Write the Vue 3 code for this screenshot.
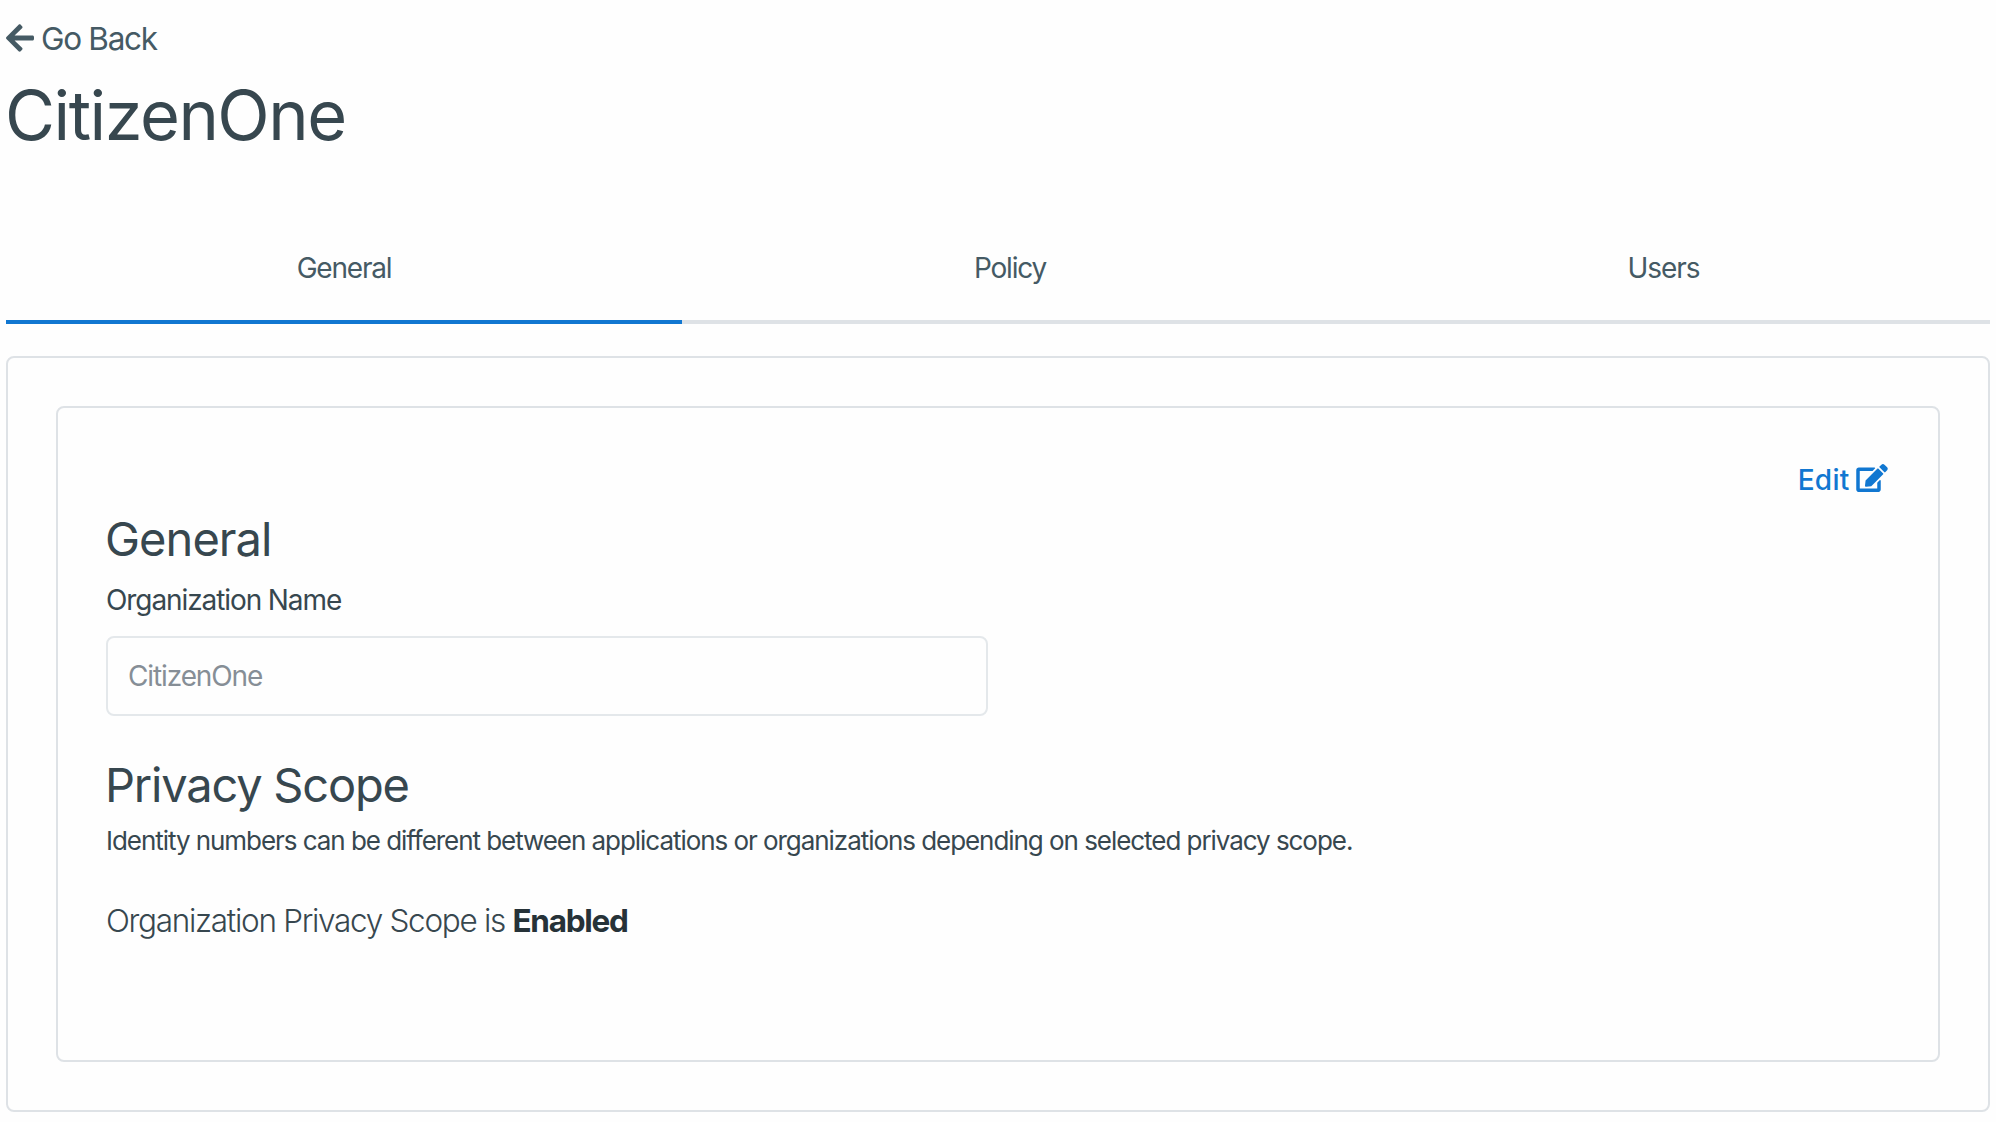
<script setup>
import { ref } from 'vue'

const active = ref('general')
const tabs = [
  { id: 'general', label: 'General' },
  { id: 'policy', label: 'Policy' },
  { id: 'users', label: 'Users' }
]
const organization = ref('CitizenOne')
</script>

<template>
  <main class="page">
    <a class="back">
      <svg class="back-icon" viewBox="0 0 448 512" aria-hidden="true">
        <path fill="currentColor" d="M257.5 445.1l-22.2 22.2c-9.4 9.4-24.6 9.4-33.9 0L7 273c-9.4-9.4-9.4-24.6 0-33.9L201.4 44.7c9.4-9.4 24.6-9.4 33.9 0l22.2 22.2c9.5 9.5 9.3 25-.4 34.3L136.6 216H424c13.3 0 24 10.7 24 24v32c0 13.3-10.7 24-24 24H136.6l120.5 114.8c9.8 9.3 10 24.8.4 34.3z" />
      </svg>
      <span>Go Back</span>
    </a>
    <h1 class="title">{{ organization }}</h1>

    <nav class="tabs">
      <a
        v-for="tab in tabs"
        :key="tab.id"
        class="tab"
        :class="[tab.id, { active: tab.id === active }]"
        @click="active = tab.id"
      >{{ tab.label }}</a>
    </nav>

    <section class="card outer">
      <div class="card inner">
        <a class="edit">
          <span>Edit</span>
          <svg class="edit-icon" viewBox="0 0 576 512" aria-hidden="true">
            <path fill="currentColor" d="M402.6 83.2l90.2 90.2c3.8 3.8 3.8 10 0 13.8L274.4 405.6l-92.8 10.3c-12.4 1.4-22.9-9.1-21.5-21.5l10.3-92.8L388.8 83.2c3.8-3.8 10-3.8 13.8 0zm162-22.9l-48.8-48.8c-15.2-15.2-39.9-15.2-55.2 0l-35.4 35.4c-3.8 3.8-3.8 10 0 13.8l90.2 90.2c3.8 3.8 10 3.8 13.8 0l35.4-35.4c15.2-15.3 15.2-40 0-55.2zM384 346.2V448H64V128h229.8c3.2 0 6.2-1.3 8.5-3.5l40-40c7.6-7.6 2.2-20.5-8.5-20.5H48C21.5 64 0 85.5 0 112v352c0 26.5 21.5 48 48 48h352c26.5 0 48-21.5 48-48V306.2c0-10.7-12.9-16-20.5-8.5l-40 40c-2.2 2.3-3.5 5.3-3.5 8.5z" />
          </svg>
        </a>
        <h2 class="heading">General</h2>
        <label class="label" for="org-name">Organization Name</label>
        <input id="org-name" class="field" type="text" :value="organization" disabled />
        <h2 class="heading privacy">Privacy Scope</h2>
        <p class="hint">Identity numbers can be different between applications or organizations depending on selected privacy scope.</p>
        <p class="status">Organization Privacy Scope is <strong>Enabled</strong></p>
      </div>
    </section>
  </main>
</template>

<style>
body {
  background: #fefefe;
}
</style>

<style scoped>
.page,
.page * {
  box-sizing: border-box;
}
.page {
  display: flex;
  flex-direction: column;
  padding: 19px 6px 10px;
  color: #37474f;
  font-family: Inter, "Liberation Sans", sans-serif;
}
h1,
h2,
p {
  margin: 0;
  font-weight: 400;
}
.back {
  display: flex;
  align-items: center;
  gap: 7px;
  color: #455a64;
  font-size: 31.5px;
  line-height: 40px;
  letter-spacing: -1.3px;
}
.back-icon {
  width: 28px;
  height: 32px;
  margin-bottom: 2px;
}
.title {
  margin: 17px 0 0 -1px;
  font-size: 68.5px;
  line-height: 80px;
  letter-spacing: -1.5px;
}
.tabs {
  display: flex;
  margin-top: 60px;
}
.tab {
  padding: 32px 0;
  border-bottom: 4px solid #dee2e6;
  color: #455a64;
  font-size: 28px;
  line-height: 40px;
  letter-spacing: -1.2px;
  text-align: center;
}
.tab.general {
  width: 676px;
}
.tab.policy {
  width: 656px;
}
.tab.users {
  flex: 1;
  padding-right: 1px;
  letter-spacing: -1.1px;
}
.tab.active {
  border-bottom-color: #1177d1;
}
.card {
  border: 2px solid #dee2e6;
  border-radius: 8px;
}
.outer {
  margin-top: 32px;
  padding: 48px;
}
.inner {
  display: flex;
  flex-direction: column;
  height: 656px;
  padding: 52px 48px 48px;
}
.edit {
  display: flex;
  align-self: flex-end;
  align-items: center;
  gap: 6.5px;
  margin-right: 2px;
  color: #1177d1;
  font-size: 28px;
  font-weight: 500;
  line-height: 40px;
  letter-spacing: 0.25px;
}
.edit-icon {
  width: 32px;
  height: 28px;
  margin-bottom: 4px;
}
.heading {
  margin: 11px 0 0 -1px;
  font-size: 47px;
  line-height: 56px;
  letter-spacing: -0.95px;
}
.label {
  margin-top: 13px;
  font-size: 28px;
  line-height: 40px;
  letter-spacing: -1.09px;
}
.field {
  width: 882px;
  height: 80px;
  margin-top: 16px;
  padding: 0 20px;
  border: 2px solid #e4e8eb;
  border-radius: 8px;
  background: transparent;
  color: #868e96;
  font: inherit;
  font-size: 28px;
  letter-spacing: -1.12px;
}
.privacy {
  margin-top: 41px;
  letter-spacing: -1.2px;
}
.hint {
  margin-top: 8px;
  font-size: 26px;
  line-height: 40px;
  letter-spacing: -1.05px;
  white-space: nowrap;
}
.status {
  margin-top: 40px;
  font-size: 31.5px;
  font-weight: 300;
  line-height: 40px;
  letter-spacing: -1.3px;
}
.status strong {
  color: #263238;
  font-weight: 700;
}
</style>
